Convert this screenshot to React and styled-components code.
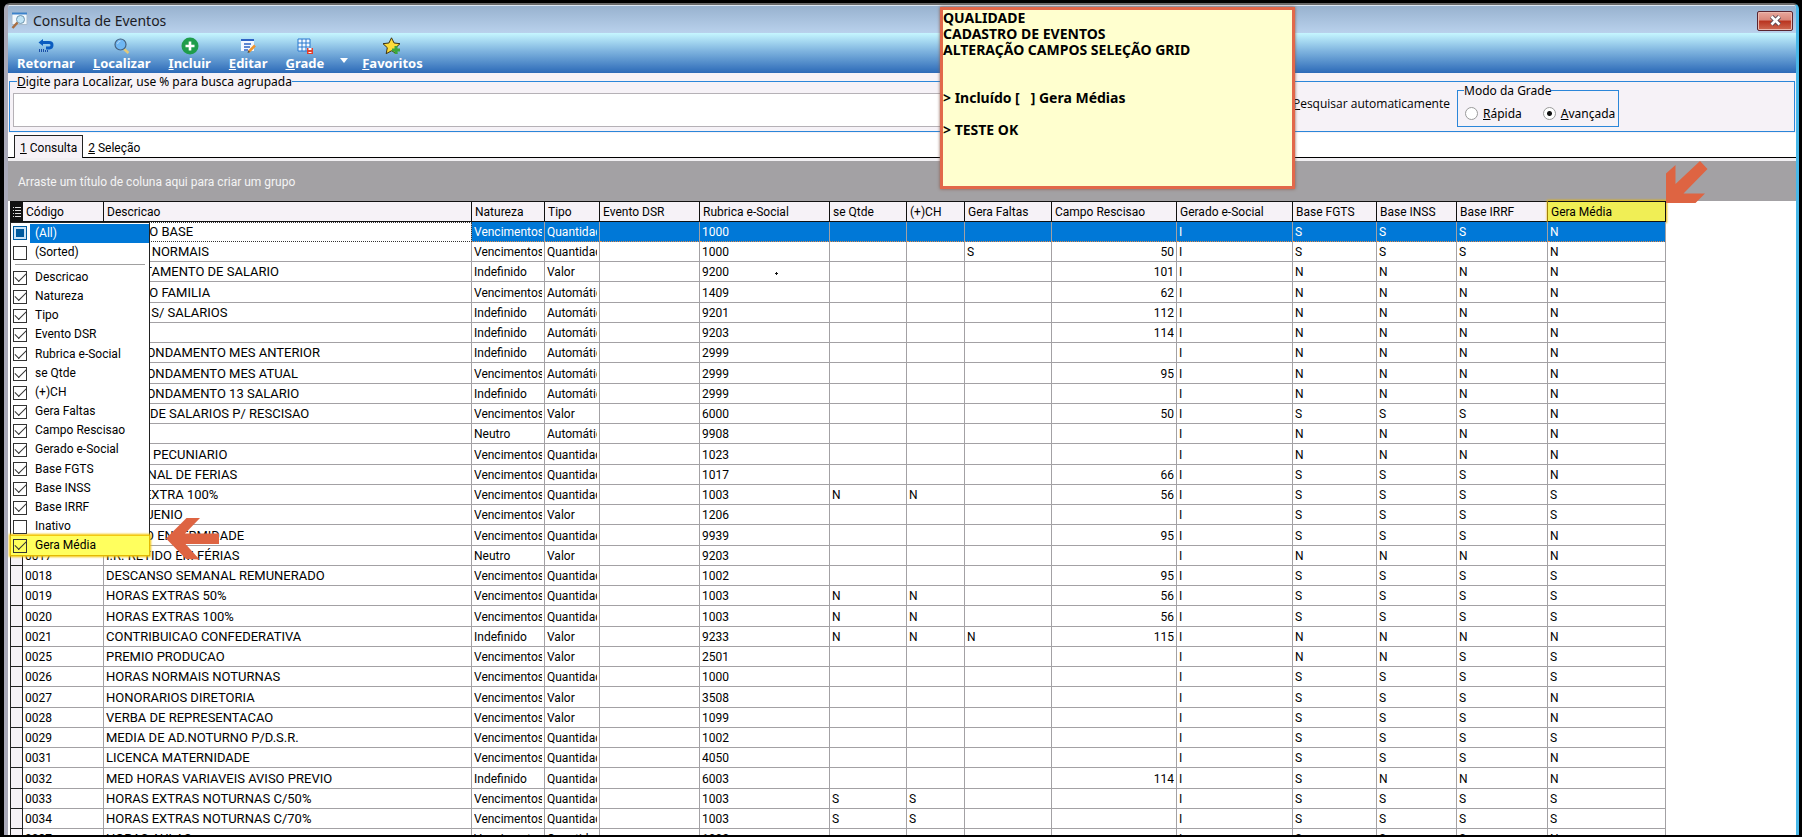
import React, { useState } from "react";
import styled, { createGlobalStyle, css } from "styled-components";

const COLUMNS = [
  { key: "codigo", title: "Código", width: 81 },
  { key: "descricao", title: "Descricao", width: 368 },
  { key: "natureza", title: "Natureza", width: 73 },
  { key: "tipo", title: "Tipo", width: 55 },
  { key: "dsr", title: "Evento DSR", width: 100 },
  { key: "rubrica", title: "Rubrica e-Social", width: 130 },
  { key: "qtde", title: "se Qtde", width: 77 },
  { key: "ch", title: "(+)CH", width: 58 },
  { key: "faltas", title: "Gera Faltas", width: 87 },
  { key: "campo", title: "Campo Rescisao", width: 125, right: true },
  { key: "gerado", title: "Gerado e-Social", width: 116 },
  { key: "fgts", title: "Base FGTS", width: 84 },
  { key: "inss", title: "Base INSS", width: 80 },
  { key: "irrf", title: "Base IRRF", width: 91 },
  { key: "media", title: "Gera Média", width: 118, marked: true },
];

const V = "Vencimentos";
const I = "Indefinido";
const Q = "Quantidade";
const A = "Automático";

const evento = (codigo, descricao, natureza, tipo, rubrica, bases, extra) => ({
  codigo,
  descricao,
  natureza,
  tipo,
  rubrica,
  gerado: "I",
  fgts: bases[0],
  inss: bases[1],
  irrf: bases[2],
  media: bases[3],
  ...extra,
});

const EVENTOS = [
  evento("0001", "SALARIO BASE", V, Q, "1000", "SSSN"),
  evento("0002", "HORAS NORMAIS", V, Q, "1000", "SSSN", { faltas: "S", campo: 50 }),
  evento("0003", "ADIANTAMENTO DE SALARIO", I, "Valor", "9200", "NNNN", { campo: 101 }),
  evento("0004", "SALARIO FAMILIA", V, A, "1409", "NNNN", { campo: 62 }),
  evento("0005", "I.N.S.S. S/ SALARIOS", I, A, "9201", "NNNN", { campo: 112 }),
  evento("0006", "", I, A, "9203", "NNNN", { campo: 114 }),
  evento("0007", "ARREDONDAMENTO MES ANTERIOR", I, A, "2999", "NNNN"),
  evento("0008", "ARREDONDAMENTO MES ATUAL", V, A, "2999", "NNNN", { campo: 95 }),
  evento("0009", "ARREDONDAMENTO 13 SALARIO", I, A, "2999", "NNNN"),
  evento("0010", "SALDO DE SALARIOS P/ RESCISAO", V, "Valor", "6000", "SSSN", { campo: 50 }),
  evento("0011", "", "Neutro", A, "9908", "NNNN"),
  evento("0012", "ABONO PECUNIARIO", V, Q, "1023", "NNNN"),
  evento("0013", "ADICIONAL DE FERIAS", V, Q, "1017", "SSSN", { campo: 66 }),
  evento("0014", "HORA EXTRA 100%", V, Q, "1003", "SSSS", { qtde: "N", ch: "N", campo: 56 }),
  evento("0015", "QUINQUENIO", V, "Valor", "1206", "SSSS"),
  evento("0016", "AUXILIO ENFERMIDADE", V, Q, "9939", "SSSN", { campo: 95 }),
  evento("0017", "I.R. RETIDO EM FÉRIAS", "Neutro", "Valor", "9203", "NNNN"),
  evento("0018", "DESCANSO SEMANAL REMUNERADO", V, Q, "1002", "SSSS", { campo: 95 }),
  evento("0019", "HORAS EXTRAS 50%", V, Q, "1003", "SSSS", { qtde: "N", ch: "N", campo: 56 }),
  evento("0020", "HORAS EXTRAS 100%", V, Q, "1003", "SSSS", { qtde: "N", ch: "N", campo: 56 }),
  evento("0021", "CONTRIBUICAO CONFEDERATIVA", I, "Valor", "9233", "NNNN", {
    qtde: "N",
    ch: "N",
    faltas: "N",
    campo: 115,
  }),
  evento("0025", "PREMIO PRODUCAO", V, "Valor", "2501", "NNSS"),
  evento("0026", "HORAS NORMAIS NOTURNAS", V, Q, "1000", "SSSS"),
  evento("0027", "HONORARIOS DIRETORIA", V, "Valor", "3508", "SSSN"),
  evento("0028", "VERBA DE REPRESENTACAO", V, "Valor", "1099", "SSSN"),
  evento("0029", "MEDIA DE AD.NOTURNO P/D.S.R.", V, Q, "1002", "SSSS"),
  evento("0031", "LICENCA MATERNIDADE", V, Q, "4050", "SSSN"),
  evento("0032", "MED HORAS VARIAVEIS AVISO PREVIO", I, Q, "6003", "SNNN", { campo: 114 }),
  evento("0033", "HORAS EXTRAS NOTURNAS C/50%", V, Q, "1003", "SSSS", { qtde: "S", ch: "S" }),
  evento("0034", "HORAS EXTRAS NOTURNAS C/70%", V, Q, "1003", "SSSS", { qtde: "S", ch: "S" }),
  evento("0037", "HORAS AULAS", V, Q, "1002", "SSSN"),
];

const CAMPOS = [
  "Descricao",
  "Natureza",
  "Tipo",
  "Evento DSR",
  "Rubrica e-Social",
  "se Qtde",
  "(+)CH",
  "Gera Faltas",
  "Campo Rescisao",
  "Gerado e-Social",
  "Base FGTS",
  "Base INSS",
  "Base IRRF",
  "Inativo",
  "Gera Média",
];

const BackIcon = () => (
  <svg width="18" height="16" viewBox="0 0 18 16">
    <path
      d="M6 1 1.500 4.500 6 8V6h6q1.500 0 1.500 1.200T12 8.500H9v3h3.500q4-.5 4-4.500T12 3H6z"
      fill="#0a5cc0"
    />
    <path d="M2.500 11v3M4.500 11v3M6.500 11v3M8.500 12v2M10.500 12v2" stroke="#1a4fa8" />
  </svg>
);

const SearchIcon = () => (
  <svg width="18" height="16" viewBox="0 0 18 16">
    <path d="m11 11 4.500 4" stroke="#e3c878" strokeWidth="2.500" />
    <circle cx="7.500" cy="6.500" r="5.500" fill="#6fb7f3" stroke="#44617f" strokeWidth="1.200" />
    <path d="M4.500 6q.5-3 3-3" stroke="#b9defa" fill="none" />
  </svg>
);

const AddIcon = () => (
  <svg width="18" height="18" viewBox="0 0 18 18">
    <circle cx="9" cy="9" r="8.500" fill="#1f9d4b" />
    <path d="M9 4.500v9M4.500 9h9" stroke="#fff" strokeWidth="2.600" />
  </svg>
);

const EditIcon = () => (
  <svg width="18" height="16" viewBox="0 0 18 16">
    <path d="M2 1h13v12H2z" fill="#f3f7ff" />
    <path d="M2 1h13v2H2z" fill="#2c62c4" />
    <path d="M5 6h7M5 9h6M5 12h4" stroke="#2c62c4" strokeWidth="1.500" />
    <path d="m9.500 14 6.500-6.500" stroke="#f0962d" strokeWidth="2.500" />
    <path d="m8.500 15 1-2.500 1.500 1.500z" fill="#444" />
  </svg>
);

const GridIcon = () => (
  <svg width="18" height="16" viewBox="0 0 18 16">
    <path d="M2 1h12v12H2z" fill="#f3f9ff" />
    <path d="M2 1h12v12H2zM6 1v12M10 1v12M2 5h12M2 9h12" stroke="#2979cf" fill="none" />
    <path d="M11 10h6v6h-6z" fill="#e4402c" />
    <path d="M12.500 10h3v2h-3zM12.500 14h3v1h-3z" fill="#fff" />
  </svg>
);

const StarIcon = () => (
  <svg width="20" height="18" viewBox="0 0 20 18">
    <path
      d="m9.500.8 2.600 5.200 5.900.7-4.300 4 1.200 6-5.400-2.900L4.200 16.700l1.100-6L1 6.700l5.900-.7z"
      fill="#fcdc3a"
      stroke="#3d3312"
    />
    <path d="M14 9v8M10 13h8" stroke="#3aa63f" strokeWidth="3" />
  </svg>
);

const WindowIcon = () => (
  <svg width="17" height="17" viewBox="0 0 17 17">
    <path d="M1 .5h15v12H1z" fill="#f2f8fd" stroke="#a9bccd" />
    <path d="M1 .5h15v2H1z" fill="#3b82cc" />
    <circle cx="9.500" cy="7.500" r="4" fill="#bfe3f5" stroke="#6e94ad" />
    <path d="m6.500 10.500-5 5.500" stroke="#a86e43" strokeWidth="2.500" />
  </svg>
);

const TOOLS = [
  { label: "Retornar", Icon: BackIcon },
  { label: "Localizar", Icon: SearchIcon, hot: true },
  { label: "Incluir", Icon: AddIcon, hot: true },
  { label: "Editar", Icon: EditIcon, hot: true },
  { label: "Grade", Icon: GridIcon, hot: true, menu: true },
  { label: "Favoritos", Icon: StarIcon, hot: true },
];

const HotText = ({ children }) => (
  <span>
    <u>{children[0]}</u>
    {children.slice(1)}
  </span>
);

const App = () => {
  const [busca, setBusca] = useState("");
  const [auto, setAuto] = useState(true);
  const [modo, setModo] = useState("avancada");
  const [visiveis, setVisiveis] = useState(CAMPOS.filter((campo) => campo !== "Inativo"));

  const onToggleCampo = (campo) => {
    setVisiveis(
      visiveis.includes(campo)
        ? visiveis.filter((item) => item !== campo)
        : [...visiveis, campo]
    );
  };

  return (
    <>
      <GlobalStyle />
      <Desktop>
        <Window>
          <TitleBar>
            <WindowIcon />
            <Title>Consulta de Eventos</Title>
            <CloseButton aria-label="Fechar">
              <svg width="13" height="11" viewBox="0 0 13 11">
                <path d="m2.500 1.500 8 8m0-8-8 8" stroke="#5b4a55" strokeWidth="4.500" />
                <path d="m2.500 1.500 8 8m0-8-8 8" stroke="#fff" strokeWidth="2.600" />
              </svg>
            </CloseButton>
          </TitleBar>

          <ToolBar>
            {TOOLS.map(({ label, Icon, hot, menu }) => (
              <ToolGroup key={label} $menu={menu}>
                <ToolButton>
                  <ToolIcon>
                    <Icon />
                  </ToolIcon>
                  {hot ? <HotText>{label}</HotText> : label}
                </ToolButton>
                {menu && (
                  <MenuButton aria-label="Opções da grade">
                    <svg width="8" height="5" viewBox="0 0 8 5">
                      <path d="M0 0h8L4 5z" fill="#fff" />
                    </svg>
                  </MenuButton>
                )}
              </ToolGroup>
            ))}
          </ToolBar>

          <SearchPanel>
            <SearchGroup>
              <GroupTitle $indent>
                <label htmlFor="busca">
                  <HotText>Digite para Localizar, use % para busca agrupada</HotText>
                </label>
              </GroupTitle>
              <SearchInput
                id="busca"
                value={busca}
                onChange={(event) => setBusca(event.target.value)}
              />
              <AutoLabel>
                <input type="checkbox" checked={auto} onChange={() => setAuto(!auto)} />
                <HotText>Pesquisar automaticamente</HotText>
              </AutoLabel>
              <ModeGroup>
                <GroupTitle>Modo da Grade</GroupTitle>
                <RadioLabel>
                  <Radio
                    name="modo"
                    checked={modo === "rapida"}
                    onChange={() => setModo("rapida")}
                  />
                  <HotText>Rápida</HotText>
                </RadioLabel>
                <RadioLabel>
                  <Radio
                    name="modo"
                    checked={modo === "avancada"}
                    onChange={() => setModo("avancada")}
                  />
                  <HotText>Avançada</HotText>
                </RadioLabel>
              </ModeGroup>
            </SearchGroup>
          </SearchPanel>

          <TabBar>
            <Tab $active>
              <HotText>1 Consulta</HotText>
            </Tab>
            <Tab>
              <HotText>2 Seleção</HotText>
            </Tab>
          </TabBar>

          <GroupArea>Arraste um título de coluna aqui para criar um grupo</GroupArea>

          <GridArea>
            <Table>
              <colgroup>
                <Col $width={13} />
                {COLUMNS.map((column) => (
                  <Col key={column.key} $width={column.width} />
                ))}
              </colgroup>
              <thead>
                <tr>
                  <Corner>
                    <svg width="8" height="12" viewBox="0 0 8 12">
                      <path
                        d="M0 1.500h1M0 4.500h1M0 7.500h1M0 10.500h1M2 1.500h6M2 4.500h6M2 7.500h6M2 10.500h6"
                        stroke="#ddd"
                      />
                    </svg>
                  </Corner>
                  {COLUMNS.map((column) => (
                    <HeadCell key={column.key} $marked={column.marked}>
                      {column.title}
                    </HeadCell>
                  ))}
                </tr>
              </thead>
              <tbody>
                {EVENTOS.map((item, index) => (
                  <Row key={item.codigo} $selected={index === 0}>
                    <Indicator />
                    {COLUMNS.map((column) => (
                      <Cell
                        key={column.key}
                        $right={column.right}
                        $caps={column.key === "descricao"}
                        $focused={index === 0 && column.key === "descricao"}
                      >
                        <CellText>{item[column.key]}</CellText>
                      </Cell>
                    ))}
                  </Row>
                ))}
              </tbody>
            </Table>

            <FieldMenu>
              <FieldItem>
                <FieldCheck checked={false} $partial readOnly />
                <FieldName $active>(All)</FieldName>
              </FieldItem>
              <FieldItem>
                <FieldCheck checked={false} readOnly />
                <FieldName>(Sorted)</FieldName>
              </FieldItem>
              <Divider />
              {CAMPOS.map((campo) => (
                <FieldItem key={campo} $marked={campo === "Gera Média"}>
                  <FieldCheck
                    checked={visiveis.includes(campo)}
                    onChange={() => onToggleCampo(campo)}
                  />
                  <FieldName>{campo}</FieldName>
                </FieldItem>
              ))}
            </FieldMenu>

            <Pointer width="5" height="5" viewBox="0 0 5 5">
              <path d="M2.500 1v3M1 2.500h3" stroke="#111" />
            </Pointer>
            <MenuArrow width="53" height="42" viewBox="0 0 53 42">
              <path d="M0 20.500 20.500 0H34L19 15.500h34V26H19.500L33.500 41.500 20 41z" />
            </MenuArrow>
            <HeadArrow width="43" height="43" viewBox="0 0 43 43">
              <path d="M1 12.500 10.500 4v19L35 0l7.500 8L18.500 32.500H40L30.500 42H1z" />
            </HeadArrow>
          </GridArea>
        </Window>

        <Note>
          {`QUALIDADE
CADASTRO DE EVENTOS
ALTERAÇÃO CAMPOS SELEÇÃO GRID


> Incluído [   ] Gera Médias

> TESTE OK`}
        </Note>
      </Desktop>
    </>
  );
};

export default App;

const GlobalStyle = createGlobalStyle`
  * {
    box-sizing: border-box;
  }

  body {
    margin: 0;
    background: #000;
    color: #000;
    font-family: Roboto, "Liberation Sans", sans-serif;
    font-size: 12px;
  }

  button, input {
    font: inherit;
    margin: 0;
  }
`;

const uiFont = css`
  font-family: "Noto Sans", "Open Sans", sans-serif;
`;

const Desktop = styled.div`
  position: relative;
  height: 100vh;
  padding: 3px 3px 2px 4px;
  overflow: hidden;
`;

const Window = styled.main`
  display: flex;
  flex-direction: column;
  height: 100%;
  border: solid;
  border-width: 2px 3px 0 4px;
  border-color: #6a6a6a #49b8e8 #000 #a9a9b9;
  border-radius: 6px 6px 0 0;
  background: #fff;
  overflow: hidden;
`;

const TitleBar = styled.header`
  ${uiFont}
  display: flex;
  align-items: center;
  gap: 5px;
  flex: none;
  height: 28px;
  padding: 2px 3px 0;
  border-top: 1px solid #dfe9f4;
  background: linear-gradient(#98b2cf, #b9d1ec);
`;

const Title = styled.h1`
  flex: 1;
  margin: 0;
  color: #1c1c24;
  font-size: 14px;
  font-weight: 400;
`;

const CloseButton = styled.button`
  display: flex;
  align-items: center;
  justify-content: center;
  width: 36px;
  height: 20px;
  padding: 0;
  border: 1px solid #5a2530;
  border-radius: 2px;
  background: linear-gradient(#e8a79c 0%, #d9877a 45%, #b9331f 50%, #cf6a53 100%);
  box-shadow: inset 0 0 0 1px #eab8ae;
`;

const ToolBar = styled.nav`
  ${uiFont}
  display: flex;
  gap: 18px;
  flex: none;
  height: 40px;
  padding: 4px 9px 0;
  background: linear-gradient(#c6f6ff, #7fb4df 45%, #2c6ab8);
`;

const ToolGroup = styled.div`
  display: flex;
  gap: 16px;
  margin-right: ${(props) => (props.$menu ? -4 : 0)}px;
`;

const ToolButton = styled.button`
  display: flex;
  flex-direction: column;
  align-items: center;
  padding: 0;
  border: none;
  background: none;
  color: #fff;
  font-size: 13px;
  font-weight: 700;
  line-height: 16px;
`;

const ToolIcon = styled.span`
  display: flex;
  align-items: center;
  height: 18px;
`;

const MenuButton = styled.button`
  display: flex;
  align-items: center;
  width: 8px;
  padding: 10px 0 0;
  border: none;
  background: none;
`;

const SearchPanel = styled.section`
  ${uiFont}
  flex: none;
  padding: 0 1px 1px;
  background: #f6f2f7;
`;

const groupBox = css`
  min-width: 0;
  margin: 0;
  border: 1px solid #2b86d9;
`;

const SearchGroup = styled.fieldset`
  ${groupBox}
  display: flex;
  align-items: flex-start;
  height: 59px;
  padding: 3px 175px 0 3px;
`;

const GroupTitle = styled.legend`
  margin-left: ${(props) => (props.$indent ? 4 : 3)}px;
  padding: 1px 0 0;
  font-size: 12px;
  line-height: 16px;
`;

const SearchInput = styled.input`
  flex: 1;
  height: 34px;
  margin-right: 8px;
  padding: 0 6px;
  border: 1px solid #b5b1b6;
  background: #fff;
  outline: none;
`;

const AutoLabel = styled.label`
  display: flex;
  align-items: center;
  gap: 6px;
  height: 20px;
  margin-right: 7px;
  font-family: "Open Sans", "Noto Sans", sans-serif;
  font-size: 12px;
  white-space: nowrap;
`;

const ModeGroup = styled.fieldset`
  ${groupBox}
  display: flex;
  align-items: center;
  gap: 17px;
  width: 162px;
  height: 45px;
  margin-top: -11px;
  padding: 2px 3px 0;
`;

const RadioLabel = styled.label`
  display: flex;
  align-items: center;
  gap: 5px;
  padding-left: 4px;
  font-size: 12px;
`;

const Radio = styled.input.attrs({ type: "radio" })`
  appearance: none;
  width: 13px;
  height: 13px;
  border: 1px solid #9a9a9a;
  border-radius: 50%;
  background: #fff;

  &:checked {
    background: radial-gradient(circle, #111 2px, #fff 3px);
  }
`;

const TabBar = styled.div`
  display: flex;
  align-items: flex-end;
  flex: none;
  height: 25px;
  padding-left: 6px;
  background: linear-gradient(#000, #000) bottom / 100% 1px no-repeat #fff;
`;

const Tab = styled.button`
  height: 23px;
  padding: 2px ${(props) => (props.$active ? 5 : 4)}px 0;
  border: ${(props) => (props.$active ? "1px solid #222" : "1px solid transparent")};
  border-bottom: none;
  background: ${(props) => (props.$active ? "#f6f2f7" : "none")};
`;

const GroupArea = styled.div`
  flex: none;
  height: 43px;
  padding: 4px 10px 0;
  border-top: 3px solid #f1eff2;
  background: #a3a1a4;
  color: #f4f4f4;
  line-height: 34px;
`;

const GridArea = styled.section`
  position: relative;
  flex: 1;
  min-height: 0;
  padding-left: 2px;
`;

const Table = styled.table`
  width: 1656px;
  border-spacing: 0;
  table-layout: fixed;
`;

const Col = styled.col`
  width: ${(props) => props.$width}px;
`;

const HeadCell = styled.th`
  height: 21px;
  padding: 1px 3px 0;
  border: solid #111;
  border-width: 1px 1px 1px 0;
  background: ${(props) => (props.$marked ? "#f0ee55" : "#f6f2f7")};
  box-shadow: ${(props) => (props.$marked ? "0 0 2px 1px #e8b800" : "none")};
  font-weight: 400;
  line-height: 16px;
  text-align: left;
  white-space: nowrap;
`;

const Corner = styled.th`
  padding: 0 2px;
  background: #111;
  line-height: 0;
`;

const Cell = styled.td`
  height: 20px;
  padding: 1px 2px 0;
  border: solid #a3a1a4;
  border-width: 0 1px 1px 0;
  font-size: ${(props) => (props.$caps ? 13 : 12)}px;
  line-height: 16px;
  text-align: ${(props) => (props.$right ? "right" : "left")};
  ${(props) =>
    props.$focused &&
    css`
      &&& {
        background: #fff;
        color: #000;
        outline: 1px dotted #333;
        outline-offset: -1px;
      }
    `}
`;

const CellText = styled.div`
  white-space: nowrap;
  overflow: hidden;
`;

const Indicator = styled.td`
  border: solid #222;
  border-width: 0 1px 1px;
  background: #f6f2f7;
`;

const Row = styled.tr`
  /* the grid lines fall 81px apart every four rows */
  &:nth-child(4n) ${Cell} {
    height: 21px;
  }

  ${(props) =>
    props.$selected &&
    css`
      ${Cell} {
        background: #0078d7;
        color: #fff;
        border-bottom: 1px dotted #e08a4a;
      }
    `}
`;

const FieldMenu = styled.div`
  position: absolute;
  top: 21px;
  left: 2px;
  width: 140px;
  border: 1px solid #222;
  background: #fff;
`;

const FieldItem = styled.label`
  display: flex;
  align-items: center;
  gap: 3px;
  height: 19px;
  padding-left: 2px;
  background: ${(props) => (props.$marked ? "#ffff5e" : "#fff")};
  box-shadow: ${(props) => (props.$marked ? "0 0 2px 2px #f2c500" : "none")};

  &:nth-of-type(6n + 1) {
    height: 20px;
  }
`;

const FieldName = styled.span`
  flex: 1;
  padding-left: 5px;
  background: ${(props) => (props.$active ? "#0078d7" : "none")};
  color: ${(props) => (props.$active ? "#fff" : "#000")};
  line-height: 19px;
`;

const FieldCheck = styled.input.attrs({ type: "checkbox" })`
  appearance: none;
  display: grid;
  place-items: center;
  width: 14px;
  height: 14px;
  border: 1px solid #333;
  background: #fff;

  &:checked {
    background: none;
  }

  &:checked::after {
    content: "";
    width: 10px;
    height: 5px;
    margin-top: -3px;
    border: solid #333;
    border-width: 0 0 1px 1px;
    transform: rotate(-45deg);
  }

  ${(props) =>
    props.$partial &&
    css`
      border-color: #005a9e;
      background: #cce4f7;

      &::after {
        content: "";
        width: 8px;
        height: 8px;
        background: #005a9e;
      }
    `}
`;

const Divider = styled.hr`
  height: 1px;
  margin: 2px 4px 3px;
  border: none;
  background: #a0a0a0;
`;

const Pointer = styled.svg`
  position: absolute;
  top: 70px;
  left: 766px;
`;

const MenuArrow = styled.svg`
  position: absolute;
  top: 317px;
  left: 158px;
  fill: #de6442;
`;

const HeadArrow = styled.svg`
  position: absolute;
  top: -40px;
  left: 1657px;
  fill: #de6442;
`;

const Note = styled.aside`
  ${uiFont}
  position: absolute;
  top: 7px;
  left: 940px;
  width: 355px;
  height: 182px;
  border: 3px solid #e2684a;
  background: #ffffcf;
  box-shadow: 0 0 3px #8a5a4a;
  font-size: 14px;
  font-weight: 700;
  line-height: 16px;
  white-space: pre-wrap;
`;
